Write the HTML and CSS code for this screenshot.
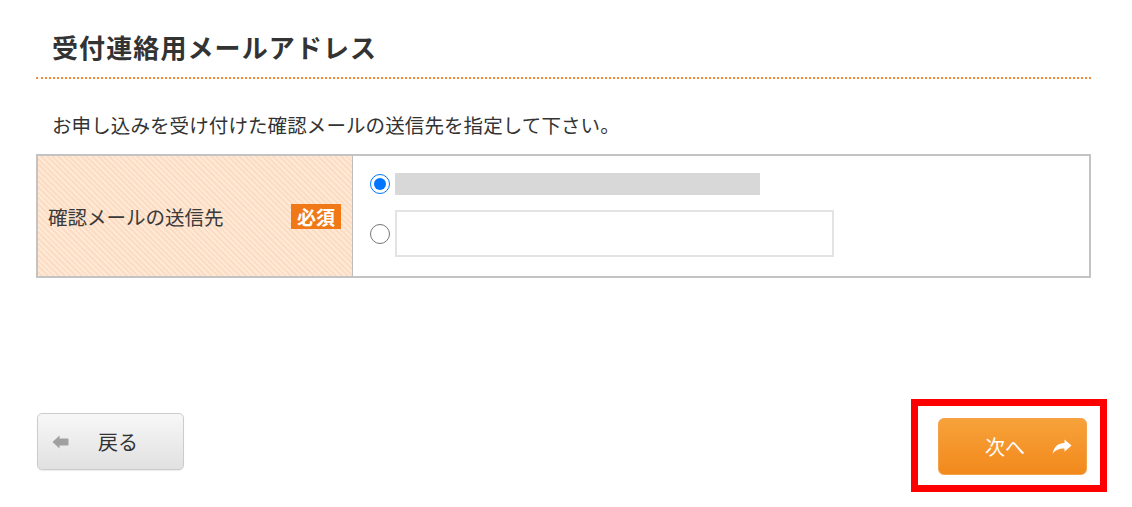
FILE: index.html
```html
<!DOCTYPE html>
<html lang="ja">
<head>
<meta charset="utf-8">
<title>受付連絡用メールアドレス</title>
<link rel="stylesheet" href="styles.css">
</head>
<body>
<div class="page">
  <h2 class="section-title">受付連絡用メールアドレス</h2>
  <p class="lead">お申し込みを受け付けた確認メールの送信先を指定して下さい。</p>

  <div class="form-table">
    <div class="form-label">
      <span class="label-text">確認メールの送信先</span>
      <span class="badge">必須</span>
    </div>
    <div class="form-value">
      <label class="choice">
        <input type="radio" name="mailto" class="radio" checked>
        <span class="masked"></span>
      </label>
      <label class="choice">
        <input type="radio" name="mailto" class="radio">
        <input type="text" class="text-input">
      </label>
    </div>
  </div>

  <div class="footer">
    <button class="btn btn-back" type="button">
      <svg class="icon-back" viewBox="0 0 17 14" width="17" height="14" aria-hidden="true">
        <path d="M0.5 7 L7.5 0.5 V3.5 H15.5 Q16.5 3.5 16.5 4.5 V9.5 Q16.5 10.5 15.5 10.5 H7.5 V13.5 Z" fill="#a0a0a0"/>
      </svg>
      <span>戻る</span>
    </button>
    <div class="highlight">
      <button class="btn btn-next" type="button">
        <span>次へ</span>
        <svg class="icon-next" viewBox="0 0 20 16" width="20" height="16" aria-hidden="true">
          <path d="M19.5 6.5 L12.5 0.5 V4 C6 4.2 2 7.5 0.5 15 C3.5 11 7 9.6 12.5 9.6 V12.8 Z" fill="#ffffff"/>
        </svg>
      </button>
    </div>
  </div>
</div>
</body>
</html>
```

FILE: styles.css
```css
* {
  box-sizing: border-box;
}

html, body {
  margin: 0;
  padding: 0;
  background: #ffffff;
}

body {
  font-family: "Noto Sans CJK JP", "Noto Sans", "Liberation Sans", sans-serif;
  color: #333333;
}

.page {
  padding-left: 36px;
  width: 1107px;
}

.section-title {
  margin: 0;
  width: 1055px;
  padding: 31px 0 14px 16px;
  font-size: 26px;
  line-height: 32px;
  letter-spacing: 1.1px;
  font-weight: bold;
  color: #333333;
  border-bottom: 2px dotted #f0893a;
}

.lead {
  margin: 32px 0 0 16px;
  font-size: 19.5px;
  line-height: 28px;
  letter-spacing: 0.1px;
  color: #333333;
}

.form-table {
  margin-top: 15px;
  width: 1055px;
  display: grid;
  grid-template-columns: 315px 1fr;
  border: 2px solid #c3c3c3;
}

.form-label {
  display: flex;
  align-items: center;
  justify-content: space-between;
  padding: 0 11px 0 10px;
  border-right: 1px solid #bdbdbd;
  background-color: #fde3cd;
  background-image: repeating-linear-gradient(45deg, #fee8d6 0 2px, #fcdcc2 2px 4px);
  font-size: 19.5px;
  color: #3a3a3a;
}

.badge {
  display: inline-block;
  padding: 0 6px;
  height: 25px;
  line-height: 25px;
  background: #f07816;
  color: #ffffff;
  font-weight: bold;
  font-size: 19px;
}

.form-value {
  display: flex;
  flex-direction: column;
  gap: 15px;
  padding: 17px 0 19px 17px;
  background: #ffffff;
}

.choice {
  display: flex;
  align-items: center;
  gap: 5px;
}

.radio {
  margin: 0;
  width: 20px;
  height: 20px;
}

.masked {
  display: block;
  width: 365px;
  height: 22px;
  background: #d8d8d8;
}

.text-input {
  width: 439px;
  height: 47px;
  margin: 0;
  border: 2px solid #e3e3e3;
  background: #ffffff;
  font-size: 18px;
}

.footer {
  margin-top: 121px;
  display: flex;
  justify-content: space-between;
  align-items: flex-start;
  padding-left: 1px;
}

.btn {
  display: flex;
  align-items: center;
  height: 57px;
  margin: 0;
  font-family: "Noto Sans CJK JP", "Noto Sans", sans-serif;
  font-size: 20px;
  cursor: pointer;
}

.btn-back {
  margin-top: 14px;
  width: 147px;
  padding: 0 0 0 14px;
  border: 1px solid #cccccc;
  border-radius: 5px;
  background: linear-gradient(#f7f7f7, #e1e1e1);
  color: #333333;
  box-shadow: 0 1px 1px rgba(0, 0, 0, 0.08);
}

.icon-back {
  margin-right: 29px;
}

.highlight {
  border: 7px solid #ff0000;
  padding: 12px 13px 10px 20px;
}

.btn-next {
  width: 149px;
  padding: 0 14px 0 46px;
  border: 1px solid #f3a24a;
  border-radius: 6px;
  background: linear-gradient(#f7a23a, #f2891c);
  color: #ffffff;
  justify-content: space-between;
}
```
